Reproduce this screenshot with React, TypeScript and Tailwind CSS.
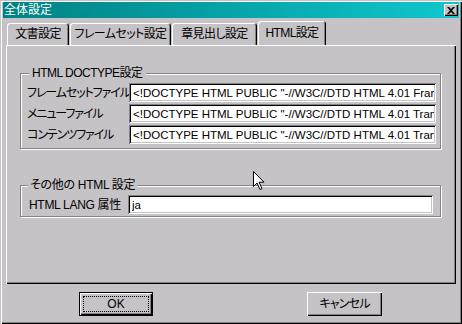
import React from 'react';

const tabs = [
  { id: 'doc', name: '文書設定', width: 'w-[62px]' },
  { id: 'frame', name: 'フレームセット設定', width: 'w-[101px]' },
  { id: 'chapter', name: '章見出し設定', width: 'w-[85px]' },
  { id: 'html', name: 'HTML設定', width: 'w-[68px]' },
];

const doctypeRows = [
  { label: 'フレームセットファイル', value: '<!DOCTYPE HTML PUBLIC "-//W3C//DTD HTML 4.01 Frameset//EN">' },
  { label: 'メニューファイル', value: '<!DOCTYPE HTML PUBLIC "-//W3C//DTD HTML 4.01 Transitional//EN">' },
  { label: 'コンテンツファイル', value: '<!DOCTYPE HTML PUBLIC "-//W3C//DTD HTML 4.01 Transitional//EN">' },
];

const sunken =
  'shadow-[inset_1px_1px_0_#848284,inset_-1px_-1px_0_#ffffff,inset_2px_2px_0_#000000,inset_-2px_-2px_0_#c6c3c6]';

const TextBox: React.FC<{ value: string; width: string }> = ({ value, width }) => (
  <input
    type="text"
    readOnly
    value={value}
    className={`${width} h-[19px] bg-white pl-[4px] pr-[2px] text-[11.5px] text-black outline-none ${sunken}`}
  />
);

const App: React.FC = () => {
  const activeTab = 'html';

  return (
    <div className="relative w-[462px] h-[324px] overflow-hidden bg-[#c6c3c6] px-[3px] pt-[2px] font-['Liberation_Sans','Noto_Sans_CJK_JP',sans-serif] text-[12px] text-black shadow-[inset_1px_1px_0_#c6c3c6,inset_2px_2px_0_#ffffff,inset_-1px_-1px_0_#000000,inset_-2px_-2px_0_#848284] [font-feature-settings:'palt']">
      {/* タイトルバー */}
      <div className="flex h-[16px] items-center justify-between bg-linear-to-r from-[#008284] to-[#10c7ce] pl-[1px] pr-[1px]">
        <span className="text-[12px] leading-none text-white">全体設定</span>
        <button className="flex h-[12px] w-[14px] items-center justify-center bg-[#c6c3c6] shadow-[inset_1px_1px_0_#ffffff,inset_-1px_-1px_0_#000000,inset_-2px_-2px_0_#848284]">
          <svg width="8" height="7" viewBox="0 0 8 7">
            <path d="M0 0h2l2 2 2-2h2L5 3.5 8 7H6L4 5 2 7H0l3-3.5z" fill="#000" />
          </svg>
        </button>
      </div>

      <div className="mx-[3px] mt-[3px]">
        {/* タブ */}
        <div className="flex h-[24px] items-end gap-[1px] pl-[1px]">
          {tabs.map((tab) => (
            <div
              key={tab.id}
              className={`${tab.width} ${
                tab.id === activeTab ? 'h-[24px]' : 'h-[22px]'
              } flex items-center justify-center rounded-t-[3px] shadow-[inset_1px_1px_0_#ffffff,inset_-1px_0_0_#000000,inset_-2px_0_0_#848284] tracking-[-0.6px]`}
            >
              {tab.name}
            </div>
          ))}
        </div>

        {/* タブパネル */}
        <div className="h-[239px] w-[450px] pl-[14px] pt-[28px] shadow-[inset_1px_1px_0_#ffffff,inset_-1px_-1px_0_#000000,inset_-2px_-2px_0_#848284]">
          {/* HTML DOCTYPE設定 */}
          <div className="relative h-[76px] w-[421px] border border-[#848284] pl-[6px] pt-[9px] shadow-[inset_1px_1px_0_#ffffff,1px_1px_0_#ffffff]">
            <span className="absolute -top-[8px] left-[8px] bg-[#c6c3c6] px-[3px] leading-[14px] tracking-[-0.5px]">
              HTML DOCTYPE設定
            </span>
            <div className="flex flex-col gap-[2px]">
              {doctypeRows.map((row) => (
                <div key={row.label} className="flex h-[19px] items-center">
                  <span className="w-[102px] whitespace-nowrap tracking-[-1.1px]">{row.label}</span>
                  <TextBox value={row.value} width="w-[307px]" />
                </div>
              ))}
            </div>
          </div>

          {/* その他の HTML 設定 */}
          <div className="relative mt-[36px] h-[32px] w-[421px] border border-[#848284] pl-[8px] pt-[9px] shadow-[inset_1px_1px_0_#ffffff,1px_1px_0_#ffffff]">
            <span className="absolute -top-[8px] left-[7px] bg-[#c6c3c6] px-[2px] leading-[14px] tracking-[-0.3px]">
              その他の HTML 設定
            </span>
            <div className="flex h-[19px] items-center">
              <span className="w-[99px] whitespace-nowrap tracking-[-0.3px]">HTML LANG 属性</span>
              <TextBox value="ja" width="w-[305px]" />
            </div>
          </div>
        </div>

        {/* ボタン */}
        <div className="mt-[8px] flex h-[24px]">
          <button className="ml-[73px] flex h-[24px] w-[74px] border border-black p-[3px] shadow-[inset_1px_1px_0_#ffffff,inset_-1px_-1px_0_#000000,inset_-2px_-2px_0_#848284]">
            <span className="flex flex-1 items-center justify-center border border-dotted border-black">OK</span>
          </button>
          <button className="ml-[154px] flex h-[24px] w-[75px] items-center justify-center tracking-[-0.8px] shadow-[inset_1px_1px_0_#ffffff,inset_-1px_-1px_0_#000000,inset_-2px_-2px_0_#848284]">
            キャンセル
          </button>
        </div>
      </div>

      {/* マウスカーソル */}
      <svg className="absolute left-[253px] top-[171px]" width="13" height="20" viewBox="0 0 13 20">
        <path d="M0.5 0.5v15l3.5-3.5 3 6.5 2-1-3-6.3h5z" fill="#fff" stroke="#000" strokeWidth="1" />
      </svg>
    </div>
  );
};

export default App;
